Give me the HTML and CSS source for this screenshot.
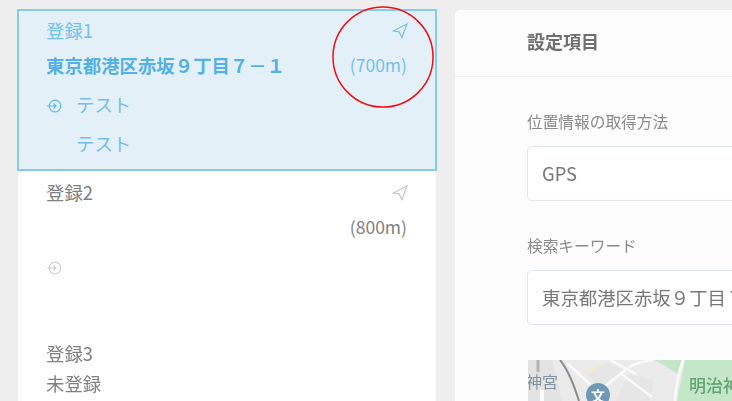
FILE: index.html
```html
<!DOCTYPE html>
<html lang="ja">
	<head>
		<meta charset="UTF-8">
		<title>設定項目</title>
		<link rel="stylesheet" href="styles.css">
	</head>
	<body>
		<div class="page">
			<div class="list">
				<div class="item selected">
					<div class="row">
						<span>登録1</span>
						<svg class="nav" viewBox="0 0 16 16"><path d="M15 1 1.500 7.800l5.500 1 3 5.700z"/></svg>
					</div>
					<div class="row">
						<span class="address">東京都港区赤坂９丁目７－１</span>
						<span class="distance">(700m)</span>
					</div>
					<div class="row line">
						<svg class="enter" viewBox="0 0 16 16"><circle cx="9" cy="8" r="5.800"/><path d="M1 8h9M7.500 5.500 10 8l-2.500 2.500"/></svg>
						<span>テスト</span>
					</div>
					<div class="row line">
						<span class="blank"></span>
						<span>テスト</span>
					</div>
				</div>
				<div class="item">
					<div class="row">
						<span>登録2</span>
						<svg class="nav" viewBox="0 0 16 16"><path d="M15 1 1.500 7.800l5.500 1 3 5.700z"/></svg>
					</div>
					<div class="row">
						<span></span>
						<span class="distance">(800m)</span>
					</div>
					<div class="row line">
						<svg class="enter" viewBox="0 0 16 16"><circle cx="9" cy="8" r="5.800"/><path d="M1 8h9M7.500 5.500 10 8l-2.500 2.500"/></svg>
					</div>
				</div>
				<div class="item">
					<div class="row">
						<span>登録3</span>
					</div>
					<div class="row short">
						<span>未登録</span>
					</div>
				</div>
			</div>
			<div class="panel">
				<div class="panel-title">設定項目</div>
				<div class="panel-body">
					<label class="field-label">位置情報の取得方法</label>
					<div class="input">GPS</div>
					<label class="field-label second">検索キーワード</label>
					<div class="input">東京都港区赤坂９丁目７－１</div>
					<div class="map">
						<svg class="map-bg" viewBox="0 0 204 41">
							<path class="park" d="M127 0h28l-5 14zM157 0h47v41h-55z"/>
							<path class="block" d="M0 0h24l10 41H0z"/>
							<path class="block-light" d="M60 14l20-12 14 8-22 18zM100 14l26 6-4 21H88z"/>
							<path class="road" d="M155 0q-7 20-8 41M62 38 100 8q8-6 25-8M92 13l32 24M40 4l26 24M82 0l26 14"/>
							<path class="dots" d="M42 22l8 8M58 12l14-6"/>
							<path class="rail" d="M32 0q10 12 19 41"/>
							<path class="rail-thin" d="M10 0v12"/>
							<path class="rail-light" d="M14 30v11"/>
							<circle class="spot" cx="70" cy="35" r="12"/>
						</svg>
						<span class="map-label shrine">神宮</span>
						<span class="map-label school">文</span>
						<span class="map-label meiji">明治神宮</span>
					</div>
				</div>
			</div>
		</div>
		<svg class="mark" viewBox="0 0 104 104"><circle cx="52" cy="52" r="50"/></svg>
	</body>
</html>
```

FILE: styles.css
```css
*{
	margin: 0;
	padding: 0;
	box-sizing: border-box;
}
html{
	overflow: hidden;
}
body{
	width: 732px;
	height: 401px;
	overflow: hidden;
	background: #eeeeee;
	font-family: "Noto Sans CJK JP", "Noto Sans", sans-serif;
	font-size: 18.400px;
	color: #808080;
}
.page{
	display: flex;
	gap: 19px;
	height: 401px;
	padding: 10px 0 0 18px;
	overflow: hidden;
	filter: blur(0.5px);
}
.list{
	flex: 0 0 418px;
	height: 391px;
	background: #ffffff;
}
.item{
	height: 161px;
	padding: 3px 29px 0 28px;
}
.selected{
	height: 162px;
	margin: -1px -1px 0;
	padding: 1px 28px 0 27px;
	border: 2px solid #84cbee;
	background: #e3f0f7;
	color: #74bfe9;
}
.row{
	display: flex;
	align-items: center;
	justify-content: space-between;
	height: 35px;
}
.short{
	height: 26px;
}
.line{
	justify-content: flex-start;
	height: 39px;
	margin-top: 2px;
}
.line + .line{
	margin-top: 0;
}
.address{
	font-weight: 700;
	color: #55b0e4;
}
.distance{
	font-size: 17.500px;
}
.nav{
	width: 16px;
	height: 16px;
	margin: 3px -1px 0 0;
	fill: none;
	stroke: #c4c4c4;
	stroke-width: 1.200;
}
.selected .nav{
	stroke: #74bfe9;
}
.enter{
	width: 16px;
	height: 16px;
	margin: 4px 14px 0 0;
	fill: none;
	stroke: #d0d0d0;
	stroke-width: 1.200;
}
.selected .enter{
	stroke: #62b7e8;
}
.blank{
	width: 30px;
}
.panel{
	flex: 1;
	height: 391px;
	border-radius: 5px 0 0 0;
	background: #fcfcfc;
	overflow: hidden;
}
.panel-title{
	height: 67px;
	padding: 18px 0 0 72px;
	border-bottom: 1px solid #f1f1f1;
	font-size: 18px;
	line-height: 26px;
	font-weight: 700;
	color: #6f6f6f;
}
.panel-body{
	padding: 33px 0 0 72px;
}
.field-label{
	display: block;
	font-size: 15.700px;
	line-height: 24px;
	color: #8a8a8a;
}
.second{
	margin-top: 33px;
}
.input{
	width: 320px;
	height: 55px;
	margin-top: 12px;
	padding-left: 14px;
	border: 1px solid #e1e6ee;
	border-radius: 5px;
	background: #ffffff;
	font-size: 18.400px;
	line-height: 52px;
	white-space: nowrap;
	color: #777777;
}
.map{
	position: relative;
	width: 204px;
	height: 41px;
	margin: 35px 0 0 1px;
	background: #ebebeb;
	overflow: hidden;
}
.map-bg{
	display: block;
	width: 204px;
	height: 41px;
}
.park{
	fill: #c4e7c9;
}
.block{
	fill: #e3e3e3;
}
.block-light{
	fill: #e6e6e6;
}
.road{
	fill: none;
	stroke: #fafafa;
	stroke-width: 2.500;
}
.dots{
	fill: none;
	stroke: #f6e9bb;
	stroke-width: 3;
	stroke-dasharray: 3 3;
}
.rail{
	fill: none;
	stroke: #8c8c8c;
	stroke-width: 2;
}
.rail-thin{
	fill: none;
	stroke: #b4b4b4;
	stroke-width: 3;
}
.rail-light{
	fill: none;
	stroke: #ffffff;
	stroke-width: 4;
}
.spot{
	fill: #7199b5;
}
.map-label{
	position: absolute;
	line-height: 20px;
}
.shrine{
	left: -2px;
	top: 11px;
	font-size: 16px;
	color: #83929f;
}
.school{
	left: 63px;
	top: 25px;
	font-size: 14px;
	font-weight: 700;
	color: #ffffff;
}
.meiji{
	left: 161px;
	top: 15px;
	font-size: 17px;
	font-weight: 500;
	white-space: nowrap;
	color: #62a473;
}
.mark{
	position: absolute;
	left: 331px;
	top: 5px;
	width: 104px;
	height: 104px;
	fill: none;
	stroke: #f20d17;
	stroke-width: 1.500;
}
```
